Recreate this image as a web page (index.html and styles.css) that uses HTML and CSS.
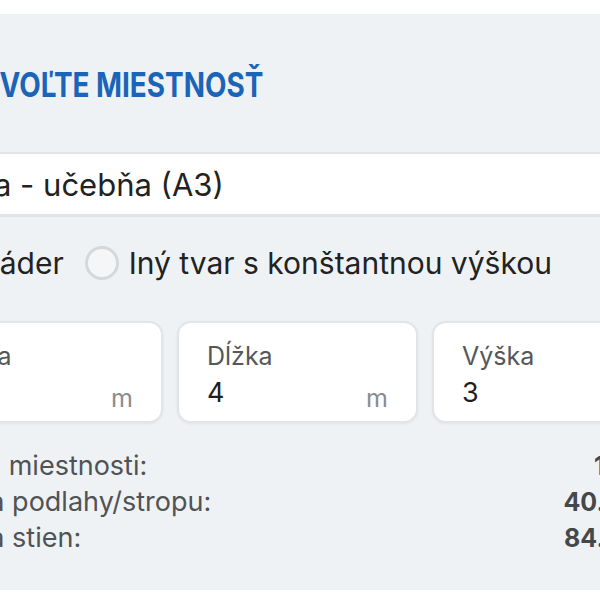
FILE: index.html
```html
<!DOCTYPE html>
<html lang="sk">
<head>
<meta charset="utf-8">
<title>Zvoľte miestnosť</title>
<link rel="stylesheet" href="styles.css">
</head>
<body>
<section class="panel">
  <h2 class="title">ZVOĽTE MIESTNOSŤ</h2>
  <div class="select">Trieda - učebňa (A3)</div>
  <div class="radios">
    <label class="radio"><span class="dot"></span>Kváder</label>
    <label class="radio"><span class="dot"></span>Iný tvar s konštantnou výškou</label>
  </div>
  <div class="fields">
    <div class="field">
      <div class="label">Šírka</div>
      <div class="row"><span class="value">10</span><span class="unit">m</span></div>
    </div>
    <div class="field">
      <div class="label">Dĺžka</div>
      <div class="row"><span class="value">4</span><span class="unit">m</span></div>
    </div>
    <div class="field">
      <div class="label">Výška</div>
      <div class="row"><span class="value">3</span><span class="unit">m</span></div>
    </div>
  </div>
  <div class="results">
    <div class="res"><span>Objem miestnosti:</span><b>120 m³</b></div>
    <div class="res"><span>Plocha podlahy/stropu:</span><b>40.00 m²</b></div>
    <div class="res"><span>Plocha stien:</span><b>84.00 m²</b></div>
  </div>
</section>
</body>
</html>
```

FILE: styles.css
```css
html, body {
  margin: 0;
  padding: 0;
  background: #ffffff;
  width: 600px;
  height: 600px;
  overflow: hidden;
  font-family: Inter, "Noto Sans", sans-serif;
}

.panel {
  margin: 14px 0 0 -108px;
  width: 811px;
  height: 576px;
  box-sizing: border-box;
  padding: 51px 30px 0;
  background: #eff2f4;
  display: flex;
  flex-direction: column;
}

.title {
  margin: 0 0 0 59px;
  padding: 0;
  font-size: 34px;
  line-height: 40px;
  font-weight: 700;
  color: #1b65b8;
  letter-spacing: 0;
  transform: scaleX(0.82);
  transform-origin: 0 50%;
}

.select {
  margin-top: 47px;
  margin-left: -23px;
  height: 65px;
  box-sizing: border-box;
  border: 2px solid #e2e5e7;
  border-bottom-width: 3px;
  background: #ffffff;
  padding: 0 18px;
  display: flex;
  align-items: center;
  font-size: 31px;
  color: #222222;
}

.radios {
  margin-top: 26px;
  margin-left: -2px;
  height: 40px;
  display: flex;
  align-items: center;
  gap: 21px;
  font-size: 30px;
  color: #222222;
}

.radio {
  display: flex;
  align-items: center;
  gap: 10px;
}

.dot {
  width: 34px;
  height: 34px;
  box-sizing: border-box;
  border-radius: 50%;
  border: 3px solid #d5d8da;
  background: #f4f6f7;
}

.fields {
  margin-top: 38px;
  display: flex;
  gap: 14px;
}

.field {
  width: 241px;
  height: 102px;
  box-sizing: border-box;
  background: #ffffff;
  border: 2px solid #e2e5e7;
  border-radius: 14px;
  box-shadow: 0 1px 3px rgba(0, 0, 0, 0.06);
  padding: 18px 28px 0;
}

.label {
  font-size: 25px;
  line-height: 30px;
  color: #555759;
}

.row {
  display: flex;
  justify-content: space-between;
  align-items: flex-start;
  margin-top: 5px;
}

.value {
  font-size: 27px;
  line-height: 34px;
  color: #1f1f1f;
}

.unit {
  margin-top: 5px;
  font-size: 25px;
  line-height: 34px;
  color: #8a8c8e;
}

.results {
  margin: 25px -5px 0 -4px;
  display: flex;
  flex-direction: column;
}

.res {
  display: flex;
  justify-content: space-between;
  align-items: baseline;
  height: 36px;
  font-size: 27px;
  line-height: 36px;
  color: #505356;
}

.res b {
  font-size: 25px;
  font-weight: 700;
  color: #45484b;
}
```
